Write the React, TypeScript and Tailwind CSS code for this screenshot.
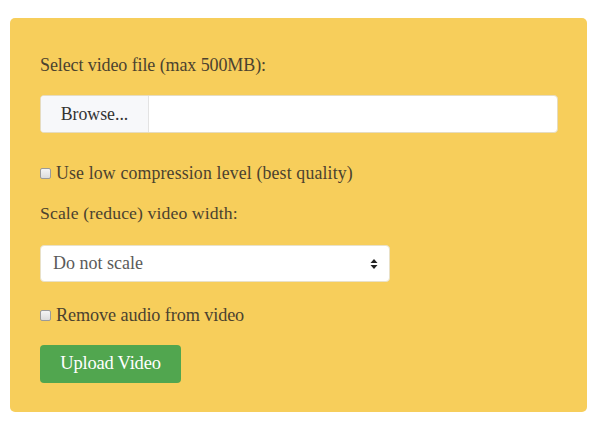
import React from "react";

function Box() {
  return (
    <span className="inline-block w-[11px] h-[11px] rounded-[2px] border border-[#9a9a9a] bg-gradient-to-b from-[#f4f4f4] to-[#dcdcdc] mr-[5px] shrink-0" />
  );
}

export default function App() {
  return (
    <div className="w-[607px] h-[428px] bg-white pt-[18px] px-[10px] font-['Liberation_Serif',serif] text-[#4b422f]">
      <div className="w-[577px] h-[394px] bg-[#f7ce5b] rounded-[5px] pl-[30px] pt-[37px]">
        <div className="text-[18px] leading-[20px] tracking-[-0.1px]">Select video file (max 500MB):</div>
        <div className="mt-[20px] flex w-[518px] h-[38px] rounded-[4px] border border-[#e6dcc0] bg-white overflow-hidden">
          <div className="w-[108px] bg-[#f7f8fa] border-r border-[#e3e3e3] flex items-center justify-center text-[17.8px] text-[#333]">Browse...</div>
          <div className="flex-1" />
        </div>
        <div className="mt-[30px] flex items-center text-[17.8px] leading-[20px] tracking-[0.15px]">
          <Box />
          <span>Use low compression level (best quality)</span>
        </div>
        <div className="mt-[20px] text-[17.7px] leading-[20px] tracking-[0.1px]">Scale (reduce) video width:</div>
        <div className="mt-[22px] w-[350px] h-[37px] rounded-[4px] border border-[#e9e1c8] bg-white flex items-center justify-between pl-[12px] pr-[11px] text-[18px] text-[#5a5a5a]">
          <span>Do not scale</span>
          <svg width="8" height="12" viewBox="0 0 8 12">
            <path d="M4 1 L7.5 5 H0.5 Z" fill="#222" />
            <path d="M4 11 L7.5 7 H0.5 Z" fill="#222" />
          </svg>
        </div>
        <div className="mt-[23px] flex items-center text-[18.2px] leading-[20px] tracking-[-0.1px]">
          <Box />
          <span>Remove audio from video</span>
        </div>
        <button className="mt-[20px] w-[141px] h-[38px] rounded-[4px] bg-[#51a64f] text-white text-[18.5px] tracking-[-0.2px] flex items-center justify-center">
          Upload Video
        </button>
      </div>
    </div>
  );
}
